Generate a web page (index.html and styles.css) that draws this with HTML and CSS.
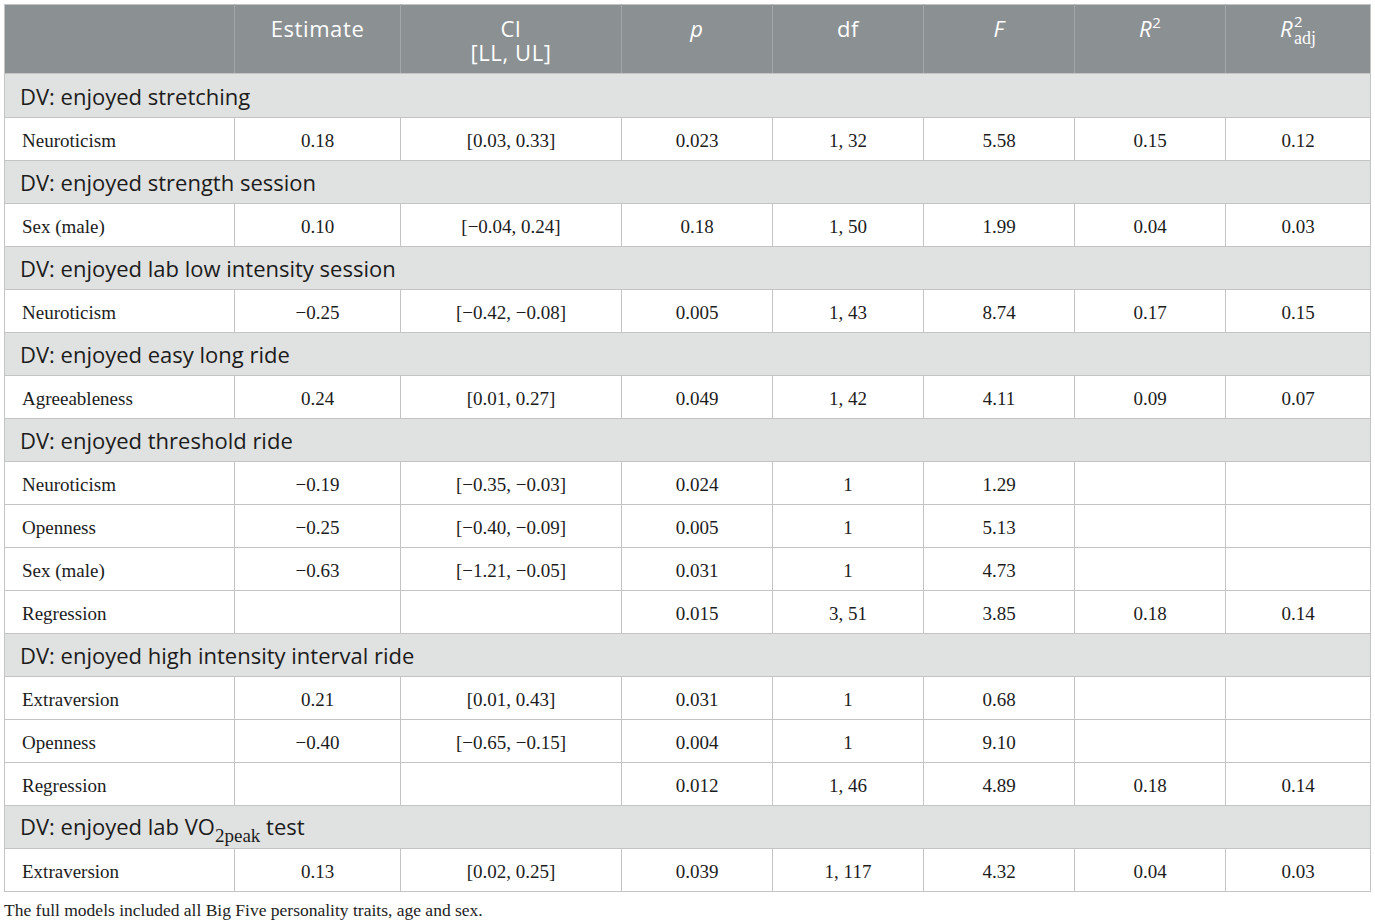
FILE: index.html
```html
<!DOCTYPE html>
<html lang="en">

<head>
    <meta charset="UTF-8">
    <meta name="viewport" content="width=device-width, initial-scale=1.0">
    <title>Table</title>
    <link rel="stylesheet" href="styles.css">
</head>

<body>
    <table class="results">
        <colgroup>
            <col class="c-name">
            <col class="c-est">
            <col class="c-ci">
            <col class="c-num">
            <col class="c-num">
            <col class="c-num">
            <col class="c-num">
            <col class="c-last">
        </colgroup>
        <thead>
            <tr>
                <th></th>
                <th>Estimate</th>
                <th>CI<br>[LL, UL]</th>
                <th><i>p</i></th>
                <th>df</th>
                <th><i>F</i></th>
                <th><i>R</i><sup>2</sup></th>
                <th><i>R</i><span class="ss"><span class="s2">2</span><span class="sadj">adj</span></span></th>
            </tr>
        </thead>
        <tbody>
            <tr class="section first"><td colspan="8">DV: enjoyed stretching</td></tr>
            <tr><td>Neuroticism</td><td>0.18</td><td>[0.03, 0.33]</td><td>0.023</td><td>1, 32</td><td>5.58</td><td>0.15</td><td>0.12</td></tr>

            <tr class="section"><td colspan="8">DV: enjoyed strength session</td></tr>
            <tr><td>Sex (male)</td><td>0.10</td><td>[−0.04, 0.24]</td><td>0.18</td><td>1, 50</td><td>1.99</td><td>0.04</td><td>0.03</td></tr>

            <tr class="section"><td colspan="8">DV: enjoyed lab low intensity session</td></tr>
            <tr><td>Neuroticism</td><td>−0.25</td><td>[−0.42, −0.08]</td><td>0.005</td><td>1, 43</td><td>8.74</td><td>0.17</td><td>0.15</td></tr>

            <tr class="section"><td colspan="8">DV: enjoyed easy long ride</td></tr>
            <tr><td>Agreeableness</td><td>0.24</td><td>[0.01, 0.27]</td><td>0.049</td><td>1, 42</td><td>4.11</td><td>0.09</td><td>0.07</td></tr>

            <tr class="section"><td colspan="8">DV: enjoyed threshold ride</td></tr>
            <tr><td>Neuroticism</td><td>−0.19</td><td>[−0.35, −0.03]</td><td>0.024</td><td>1</td><td>1.29</td><td></td><td></td></tr>
            <tr><td>Openness</td><td>−0.25</td><td>[−0.40, −0.09]</td><td>0.005</td><td>1</td><td>5.13</td><td></td><td></td></tr>
            <tr><td>Sex (male)</td><td>−0.63</td><td>[−1.21, −0.05]</td><td>0.031</td><td>1</td><td>4.73</td><td></td><td></td></tr>
            <tr><td>Regression</td><td></td><td></td><td>0.015</td><td>3, 51</td><td>3.85</td><td>0.18</td><td>0.14</td></tr>

            <tr class="section"><td colspan="8">DV: enjoyed high intensity interval ride</td></tr>
            <tr><td>Extraversion</td><td>0.21</td><td>[0.01, 0.43]</td><td>0.031</td><td>1</td><td>0.68</td><td></td><td></td></tr>
            <tr><td>Openness</td><td>−0.40</td><td>[−0.65, −0.15]</td><td>0.004</td><td>1</td><td>9.10</td><td></td><td></td></tr>
            <tr><td>Regression</td><td></td><td></td><td>0.012</td><td>1, 46</td><td>4.89</td><td>0.18</td><td>0.14</td></tr>

            <tr class="section"><td colspan="8">DV: enjoyed lab VO<span class="vo">2peak</span> test</td></tr>
            <tr><td>Extraversion</td><td>0.13</td><td>[0.02, 0.25]</td><td>0.039</td><td>1, 117</td><td>4.32</td><td>0.04</td><td>0.03</td></tr>
        </tbody>
    </table>

    <p class="note">The full models included all Big Five personality traits, age and sex.</p>
</body>

</html>
```

FILE: styles.css
```css
body {
    margin: 0;
    padding: 4px;
    background: #ffffff;
    font-family: "Liberation Serif", "Times New Roman", serif;
    color: #1c1c1c;
}

.results {
    width: 1366px;
    border-collapse: collapse;
    table-layout: fixed;
}

.c-name { width: 230px; }
.c-est { width: 166px; }
.c-ci { width: 221px; }
.c-num { width: 151px; }
.c-last { width: 145px; }

.results th {
    height: 57px;
    padding: 11px 4px 0;
    vertical-align: top;
    background: #8b9093;
    color: #ffffff;
    font-family: "Open Sans", "Noto Sans", sans-serif;
    font-weight: 400;
    font-size: 22px;
    line-height: 24px;
    letter-spacing: 0.6px;
    border: 1px solid #a3a7a9;
    border-top-color: #c4c4c4;
    border-bottom-color: #c4c4c4;
}

.results th:first-child {
    border-left-color: #c4c4c4;
}

.results th:last-child {
    border-right-color: #c4c4c4;
}

.results th sup {
    font-size: 15px;
    line-height: 0;
    vertical-align: 9px;
    letter-spacing: 0;
}

.ss {
    display: inline-block;
    vertical-align: top;
    margin-left: 1px;
    text-align: left;
    letter-spacing: 0;
}

.s2 {
    display: block;
    font-size: 15px;
    line-height: 15px;
    margin-top: -2px;
}

.sadj {
    display: block;
    font-family: "Liberation Serif", serif;
    font-size: 18px;
    line-height: 18px;
}

.results td {
    height: 38px;
    padding: 4px 4px 0;
    text-align: center;
    vertical-align: middle;
    font-size: 19px;
    border: 1px solid #c4c4c4;
}

.results td:first-child {
    text-align: left;
    padding-left: 17px;
}

.results .section td {
    height: 42px;
    padding-top: 0;
    background: #e0e2e1;
    padding-left: 15px;
    font-family: "Open Sans", "Noto Sans", sans-serif;
    font-size: 22px;
    line-height: 26px;
    color: #1c1c1c;
}

.results .section.first td {
    height: 43px;
}

.vo {
    position: relative;
    top: 7px;
    font-family: "Liberation Serif", serif;
    font-size: 19px;
}

.note {
    margin: 8px 0 0;
    font-size: 17.5px;
    color: #222222;
}
```
